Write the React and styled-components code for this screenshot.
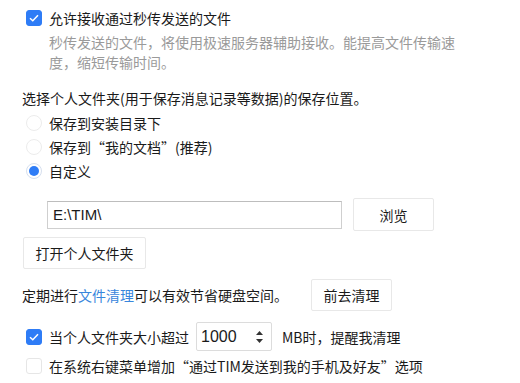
import React from "react";
import styled, { createGlobalStyle } from "styled-components";

const Global = createGlobalStyle`
  body {
    margin: 0;
    background: #ffffff;
    font-family: "Noto Sans CJK SC", "Noto Sans", sans-serif;
    font-size: 14px;
    color: #1a1a1a;
  }
`;

const Page = styled.div`
  padding: 8px 0 0 22px;
  width: 498px;
`;

const CheckRow = styled.label`
  display: flex;
  align-items: center;
  gap: 7px;
  padding-left: 4px;
  height: ${({ $h }) => $h || 20}px;
  margin-top: ${({ $mt }) => $mt || 0}px;
  line-height: 20px;
  white-space: nowrap;
`;

const Box = styled.span`
  width: 16px;
  height: 16px;
  box-sizing: border-box;
  border-radius: 3px;
  flex: none;
  display: flex;
  align-items: center;
  justify-content: center;
  background: ${({ $on }) => ($on ? "#2e7cf6" : "#ffffff")};
  border: 1px solid ${({ $on }) => ($on ? "#2e7cf6" : "#e6e6e6")};
`;

const Radio = styled.span`
  width: 16px;
  height: 16px;
  box-sizing: border-box;
  border-radius: 50%;
  flex: none;
  display: flex;
  align-items: center;
  justify-content: center;
  border: 1px solid ${({ $on }) => ($on ? "#d6dfee" : "#ececec")};
  &::after {
    content: "";
    display: ${({ $on }) => ($on ? "block" : "none")};
    width: 10px;
    height: 10px;
    border-radius: 50%;
    background: #2e7cf6;
  }
`;

const Desc = styled.p`
  margin: 4px 0 0 27px;
  width: 420px;
  color: #9a9a9a;
  line-height: 20px;
`;

const Heading = styled.div`
  margin-top: 16px;
  line-height: 20px;
`;

const Options = styled.div`
  margin-top: 3px;
  display: flex;
  flex-direction: column;
`;

const PathRow = styled.div`
  display: flex;
  align-items: center;
  gap: 11px;
  margin: 15px 0 0 25px;
`;

const PathInput = styled.div`
  width: 295px;
  height: 28px;
  box-sizing: border-box;
  border: 1px solid #cfcfcf;
  border-top-color: #bdbdbd;
  padding-left: 5px;
  display: flex;
  align-items: center;
  font-family: "Liberation Sans", "Noto Sans CJK SC", sans-serif;
  font-size: 15px;
`;

const Button = styled.button`
  width: ${({ $w }) => $w}px;
  height: ${({ $h }) => $h || 32}px;
  margin-top: ${({ $mt }) => $mt || 0}px;
  margin-left: ${({ $ml }) => $ml || 0}px;
  background: #ffffff;
  border: 1px solid #e8e8e8;
  border-radius: 2px;
  font: inherit;
  color: #1a1a1a;
  padding: 0;
  flex: none;
  display: block;
`;

const CleanRow = styled.div`
  display: flex;
  align-items: center;
  margin-top: 10px;
  height: 32px;
`;

const Link = styled.span`
  color: #3886dc;
`;

const Spin = styled.div`
  width: 76px;
  height: 29px;
  box-sizing: border-box;
  border: 1px solid #dcdcdc;
  border-radius: 2px;
  margin: 0 3px 0 0;
  display: flex;
  align-items: center;
  justify-content: space-between;
  padding: 0 7px 0 4px;
  font-family: "Liberation Sans", sans-serif;
  font-size: 16px;
`;

const Check = () => (
  <svg width="10" height="8" viewBox="0 0 10 8">
    <path d="M1 4.2 L3.8 6.8 L9 1.2" fill="none" stroke="#fff" strokeWidth="1.5" />
  </svg>
);

const Arrows = () => (
  <svg width="9" height="14" viewBox="0 0 9 14">
    <path d="M4.5 1 L8 5 L1 5 Z" fill="#333" />
    <path d="M4.5 13 L8 9 L1 9 Z" fill="#333" />
  </svg>
);

export default function App() {
  return (
    <Page>
      <Global />
      <CheckRow>
        <Box $on><Check /></Box>
        允许接收通过秒传发送的文件
      </CheckRow>
      <Desc>秒传发送的文件，将使用极速服务器辅助接收。能提高文件传输速度，缩短传输时间。</Desc>

      <Heading>选择个人文件夹(用于保存消息记录等数据)的保存位置。</Heading>
      <Options>
        <CheckRow $h={24}><Radio />保存到安装目录下</CheckRow>
        <CheckRow $h={24}><Radio />保存到“我的文档”(推荐)</CheckRow>
        <CheckRow $h={24}><Radio $on />自定义</CheckRow>
      </Options>

      <PathRow>
        <PathInput>E:\TIM\</PathInput>
        <Button $w={81} $h={33}>浏览</Button>
      </PathRow>
      <Button $w={123} $mt={6} $ml={1}>打开个人文件夹</Button>

      <CleanRow>
        定期进行<Link>文件清理</Link>可以有效节省硬盘空间。
        <Button $w={81} $ml={23}>前去清理</Button>
      </CleanRow>

      <CheckRow $h={29} $mt={11}>
        <Box $on><Check /></Box>
        当个人文件夹大小超过
        <Spin>1000<Arrows /></Spin>
        MB时，提醒我清理
      </CheckRow>
      <CheckRow $mt={5}>
        <Box />
        在系统右键菜单增加“通过TIM发送到我的手机及好友”选项
      </CheckRow>
    </Page>
  );
}
